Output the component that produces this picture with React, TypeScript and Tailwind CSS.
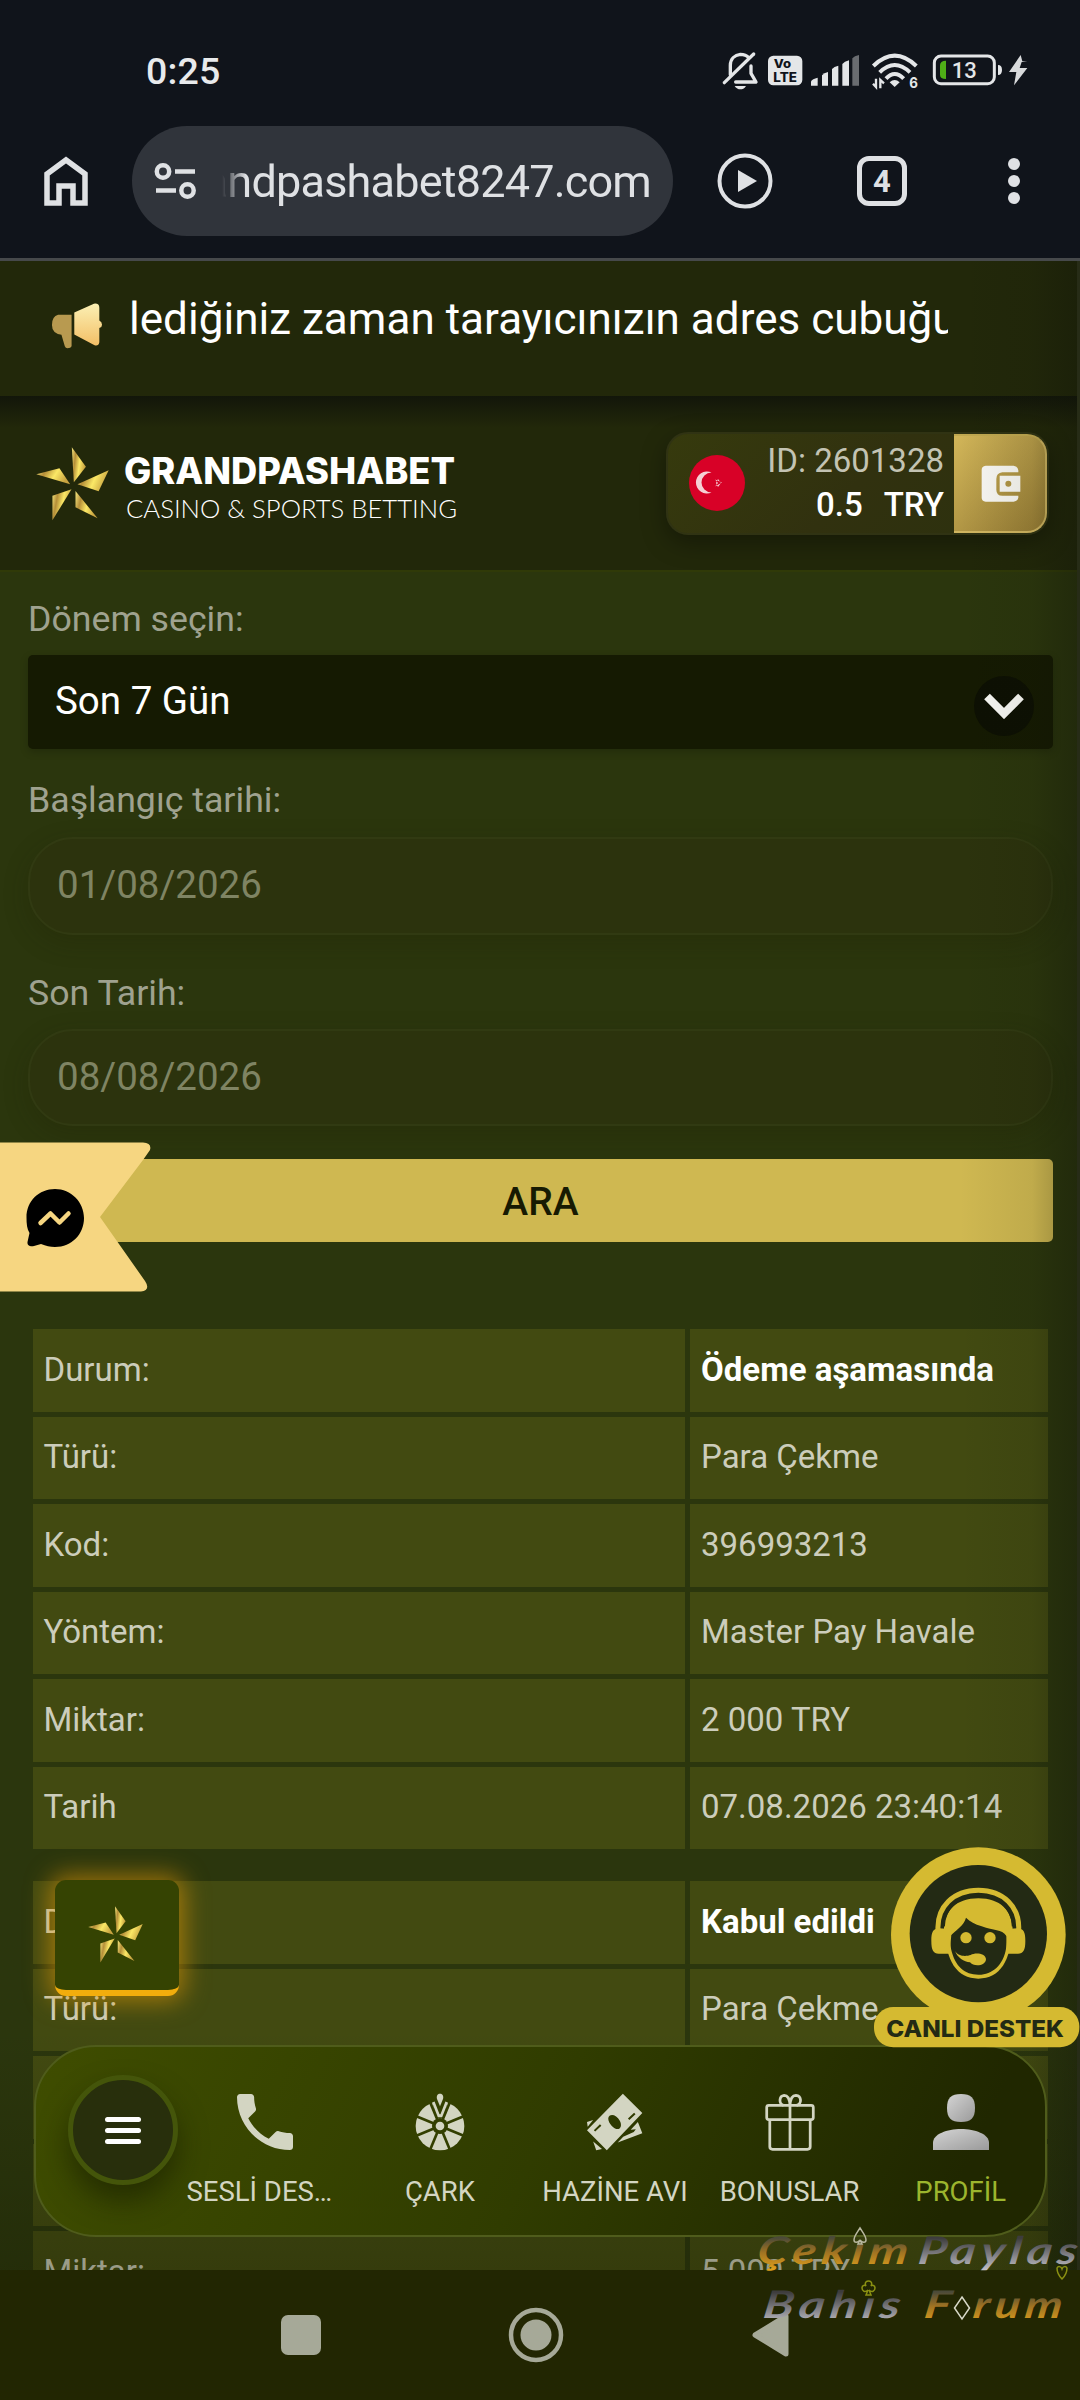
import React from "react";

const rows = [
  ["Durum:", "Ödeme aşamasında"],
  ["Türü:", "Para Çekme"],
  ["Kod:", "396993213"],
  ["Yöntem:", "Master Pay Havale"],
  ["Miktar:", "2 000 TRY"],
  ["Tarih", "07.08.2026 23:40:14"],
];

/* The third and fourth rows stay behind the tab bar */
const rows2 = [
  ["Durum:", "Kabul edildi"],
  ["Türü:", "Para Çekme"],
  ["", ""],
  ["", ""],
  ["Miktar:", "5 000 TRY"],
];

function StatusIcons() {
  return (
    <svg width="330" height="62" viewBox="0 0 990 186" className="block">
      <g fill="none" stroke="#e4e6e8" strokeWidth="10" strokeLinecap="round" strokeLinejoin="round">
        <path d="M46 104V76C46 56 60 45 76 43C88 43 96 47 101 53M108 78V100L123 126H62" />
        <path d="M28 128L116 42" />
      </g>
      <path d="M59 138H93C88 146 82 148 76 148S63 145 59 138Z" fill="#e4e6e8" />
      <rect x="159" y="47" width="103" height="89" rx="16" fill="#e4e6e8" />
      <text x="176" y="85" fontFamily="Inter" fontWeight="800" fontSize="36" textLength="52" lengthAdjust="spacingAndGlyphs" fill="#10141b">Vo</text>
      <text x="175" y="125" fontFamily="Inter" fontWeight="800" fontSize="38" textLength="71" lengthAdjust="spacingAndGlyphs" fill="#10141b">LTE</text>
      <g fill="#e4e6e8">
        <path d="M288 137V124Q292 117 308 113V137Z" />
        <path d="M321 137V106Q327 98 339 96V137Z" />
        <path d="M351 137V87Q357 79 370 77V137Z" />
        <path d="M382 137V72Q388 64 402 61V137Z" />
        <path d="M412 137V55Q418 47 432 45V137Z" opacity=".42" />
      </g>
      <g fill="none" stroke="#e4e6e8" strokeWidth="12">
        <path d="M475 78Q539 16 604 78" />
        <path d="M494 97Q539 53 585 97" />
        <path d="M513 116Q539 88 566 116" />
      </g>
      <path d="M524 127Q539 113 554 127L539 141Z" fill="#e4e6e8" />
      <path d="M483 116V141L474 131M496 145V120L507 130" fill="none" stroke="#e4e6e8" strokeWidth="7" />
      <text x="583" y="144" fontFamily="Inter" fontWeight="700" fontSize="44" textLength="26" lengthAdjust="spacingAndGlyphs" fill="#e4e6e8">6</text>
      <rect x="658" y="48" width="180" height="83" rx="20" fill="none" stroke="#e4e6e8" strokeWidth="9" />
      <path d="M675 76Q675 62 693 62V117Q675 117 675 104Z" fill="#4fae17" />
      <text x="710" y="115" fontFamily="Roboto" fontWeight="500" fontSize="66" textLength="75" lengthAdjust="spacingAndGlyphs" fill="#e4e6e8">13</text>
      <path d="M849 75Q861 75 861 90T849 105Z" fill="#e4e6e8" />
      <path d="M917 45L882 96H904L897 136L937 84H914L920 66H937L922 64Z" fill="#d8dadc" />
    </svg>
  );
}

/* Five-blade pinwheel used by the brand */
function Pinwheel({ className }: { className: string }) {
  return (
    <svg viewBox="20 470 218 222" className={className} preserveAspectRatio="none">
      <defs>
        <linearGradient id="gold" x1="0" y1="0" x2="1" y2="0.3">
          <stop offset="0" stopColor="#f8ea80" />
          <stop offset=".3" stopColor="#b58e38" />
          <stop offset=".62" stopColor="#fbe866" />
          <stop offset="1" stopColor="#c8a340" />
        </linearGradient>
      </defs>
      <g fill="url(#gold)">
        <path d="M127 471L169 529L133 576Z" />
        <path d="M237 540L207 603L144 582Z" />
        <path d="M204 684L138 651V602Z" />
        <path d="M69 690V616L126 597Z" />
        <path d="M21 552L90 534L122 582Z" />
      </g>
    </svg>
  );
}

function Label({ children, className }: { children: React.ReactNode; className: string }) {
  return (
    <div className={"flex items-center text-[35.700px] leading-none text-[#9fa28f] " + className}>{children}</div>
  );
}

function Table({ data }: { data: string[][] }) {
  return (
    <div className="mx-[33px] grid w-[1015px] grid-cols-[652px_358px] gap-[5px]">
      {data.map(([k, v], i) => (
        <React.Fragment key={i}>
          <div className="flex h-[82.5px] items-center bg-[#424a11] pb-[2px] pl-[10.500px] text-[33px] leading-none text-[#cccdbb]">{k}</div>
          <div
            className={
              "flex h-[82.5px] items-center whitespace-nowrap bg-[#424a11] pb-[2px] pl-[11px] text-[33px] leading-none " +
              (i === 0 ? "font-bold text-white" : "text-[#cccdbb]")
            }
          >
            {v}
          </div>
        </React.Fragment>
      ))}
    </div>
  );
}

function NavItem({ label, className, children }: { label: string; className: string; children: React.ReactNode }) {
  return (
    <div className={"flex flex-col items-center pt-[47px] " + className}>
      <div className="flex h-[56px] items-center">{children}</div>
      <span className="mt-[28px] whitespace-nowrap text-[27.500px] leading-[28px]">{label}</span>
    </div>
  );
}

function WheelIcon() {
  return (
    <svg width="50" height="58" viewBox="0 0 150 174">
      <mask id="spokes">
        <rect width="150" height="174" fill="#fff" />
        <g stroke="#000" strokeWidth="8">
          {[22.5, 67.5, 112.5, 157.5].map((a) => (
            <path key={a} d="M0 99H150" transform={`rotate(${a} 75 99)`} />
          ))}
        </g>
        <circle cx="75" cy="99" r="24" fill="#000" />
        <path d="M46 0L62 74H88L104 0Z" fill="#000" />
      </mask>
      <circle cx="75" cy="99" r="73" fill="#d3d5c2" mask="url(#spokes)" />
      <circle cx="75" cy="99" r="13" fill="#d3d5c2" />
      <path d="M75 2C84 2 86 10 84 18L75 40L66 18C64 10 66 2 75 2Z" fill="#d3d5c2" />
      <path d="M55 27L71 68H79L95 27" fill="none" stroke="#d3d5c2" strokeWidth="8" />
    </svg>
  );
}

function MoneyIcon() {
  return (
    <svg width="56" height="58" viewBox="140 220 164 168">
      <g fill="#d3d5c2">
        <path d="M140 304L158 298L142 318Z" />
        <path d="M158 361L184 383L167 387Z" />
        <path d="M289 304L302 337L230 364L246 347L277 333L283 325L268 327Z" />
        <path fillRule="evenodd" d="M245 221L302 278L198 387L140 328ZM206 286C196 294 208 316 222 323C238 330 244 314 236 300C228 286 214 280 206 286Z" />
      </g>
      <path d="M262 296L280 279M162 330L180 313" stroke="#303b00" strokeWidth="6" />
    </svg>
  );
}

function SupportBadge() {
  return (
    <svg width="206" height="202" viewBox="102 80 618 606" className="block">
      <circle cx="415" cy="343" r="262" fill="#d5ba31" />
      <circle cx="415" cy="340" r="206" fill="#232a14" />
      <rect x="102" y="560" width="616" height="121" rx="58" fill="#d5ba31" />
      {/* head */}
      <path d="M316 330C316 420 350 475 415 475S514 420 514 330Z" fill="#d5ba31" />
      <path d="M333 330C336 350 330 360 333 385C345 440 375 462 415 463S490 435 498 385C502 360 498 345 500 325Z" fill="#232a14" />
      <path d="M312 330C312 270 350 234 415 234S518 270 518 330L500 348C484 325 462 332 425 318C405 312 390 304 378 292C372 315 350 328 333 345Z" fill="#d5ba31" />
      <path d="M294 330C290 260 340 210 415 210S540 260 536 330" fill="none" stroke="#d5ba31" strokeWidth="15" />
      <path d="M310 318C312 262 355 224 415 224S518 262 520 318" fill="none" stroke="#232a14" strokeWidth="9" />
      <path d="M330 326V400H296C280 400 274 390 274 362S280 326 296 324Z M500 326V400H534C550 400 556 390 556 362S550 326 534 324Z" fill="#d5ba31" />
      <circle cx="378" cy="352" r="17" fill="#d5ba31" />
      <circle cx="450" cy="352" r="17" fill="#d5ba31" />
      <path d="M345 392C355 410 380 408 392 404C405 396 436 398 438 416C438 438 400 440 390 426C372 424 352 412 345 392Z" fill="#d5ba31" />
      <text x="139" y="649" fontFamily="Inter" fontWeight="800" fontSize="68" textLength="533" lengthAdjust="spacingAndGlyphs" fill="#232a14">CANLI DESTEK</text>
    </svg>
  );
}

function Watermark() {
  return (
    <svg width="330" height="130" viewBox="0 0 330 130" className="block overflow-visible">
      <defs>
        <linearGradient id="wg" gradientUnits="userSpaceOnUse" x1="0" y1="-26" x2="0" y2="6">
          <stop offset="0" stopColor="#4b4a38" />
          <stop offset=".45" stopColor="#a07322" />
          <stop offset="1" stopColor="#dfa01c" />
        </linearGradient>
        <linearGradient id="ws" gradientUnits="userSpaceOnUse" x1="0" y1="-26" x2="0" y2="6">
          <stop offset="0" stopColor="#3d3c3c" />
          <stop offset=".5" stopColor="#7d7c80" />
          <stop offset="1" stopColor="#c0bfc7" />
        </linearGradient>
      </defs>
      <g fontFamily="Lato" fontWeight="700" fontStyle="italic" fontSize="38" letterSpacing="4">
        <g transform="translate(6 53) skewX(-8)">
          <text textLength="156" lengthAdjust="spacingAndGlyphs" fill="url(#wg)">Çekım</text>
          <text x="161" textLength="164" lengthAdjust="spacingAndGlyphs" fill="url(#ws)">Paylas</text>
        </g>
        <g transform="translate(12 107) skewX(-8)">
          <text textLength="142" lengthAdjust="spacingAndGlyphs" fill="url(#ws)">Bahıs</text>
          <text x="161" textLength="32" lengthAdjust="spacingAndGlyphs" fill="url(#wg)">F</text>
          <text x="210" textLength="94" lengthAdjust="spacingAndGlyphs" fill="url(#wg)">rum</text>
        </g>
      </g>
      <g fill="none" strokeWidth="1.5">
        <path d="M110 8C107 13 104 16 104 20C104 23 108 23 110 20L108 24H112L110 20C112 23 116 23 116 20C116 16 113 13 110 8Z" transform="translate(0 9)" stroke="#b9b8a0" />
        <path d="M212 86L219.500 97L212 108L204.500 97Z" stroke="#d8d8c8" />
        <path d="M312 68C308 64 307 60 307 57C308 55 311 55 312 58C313 55 316 55 317 57C317 60 316 64 312 68Z" stroke="#8b9112" />
        <path d="M118 79L116 84H121L119 79C122 82 125 80 125 77C125 74 122 74 121 75C123 71 120 70 118.500 70S114 71 116 75C115 74 112 74 112 77C112 80 115 82 118 79Z" stroke="#8b9112" />
      </g>
    </svg>
  );
}

export default function App() {
  return (
    <div className="relative flex h-[2400px] w-[1080px] flex-col overflow-hidden bg-[#2b360d] font-['Roboto',sans-serif]">
      {/* Status bar and browser toolbar */}
      <div className="flex h-[102px] shrink-0 justify-between bg-[#10141b] pl-[146px] pr-[35px] pt-[40px]">
        <span className="pt-[12px] text-[37.500px] font-medium leading-[38px] tracking-[0.2px] text-[#e8eaec]">0:25</span>
        <StatusIcons />
      </div>
      <div className="flex h-[156px] shrink-0 items-start bg-[#10141b] pt-[24px]">
        <svg width="46" height="52" viewBox="0 0 46 52" className="ml-[43px] mt-[29px]">
          <path d="M4 19L23 5L42 19V48H30V31H16V48H4Z" fill="none" stroke="#dfe1e4" strokeWidth="5.500" />
        </svg>
        <div className="ml-[43px] flex h-[110px] w-[541px] items-center rounded-full bg-[#30343b]">
          <svg width="44" height="38" viewBox="0 0 44 38" className="ml-[22px]" fill="none" stroke="#dfe1e4" strokeWidth="4.500">
            <circle cx="9" cy="9.500" r="6.200" />
            <path d="M21 9.500H41M2 28.500H22" />
            <circle cx="33.500" cy="28.500" r="6.200" />
          </svg>
          <div className="ml-[24px] flex w-[429px] justify-end overflow-hidden whitespace-nowrap pt-[2px] text-[45px] leading-[60px] text-[#dfe1e4] [mask-image:linear-gradient(to_right,transparent,#000_24px)]">
            <span className="tracking-[-0.800px]">grandpashabet8247.com</span>
          </div>
        </div>
        <svg width="56" height="56" viewBox="0 0 56 56" className="ml-[44px] mt-[27px]">
          <circle cx="28" cy="28" r="25.500" fill="none" stroke="#dfe1e4" strokeWidth="4" />
          <path d="M21 17V39L40 28Z" fill="#dfe1e4" />
        </svg>
        <div className="ml-[84px] mt-[30px] flex h-[50px] w-[50px] items-center justify-center rounded-[12px] border-[5px] border-[#dfe1e4] text-[31px] font-bold leading-none text-[#dfe1e4]">4</div>
        <div className="ml-[101px] mt-[32px] flex flex-col gap-[5px]">
          <i className="size-[12px] rounded-full bg-[#dfe1e4]" />
          <i className="size-[12px] rounded-full bg-[#dfe1e4]" />
          <i className="size-[12px] rounded-full bg-[#dfe1e4]" />
        </div>
      </div>
      <div className="h-[3px] shrink-0 bg-[#46494b]" />

      <div className="relative flex h-[2009px] shrink-0 flex-col overflow-hidden">
        {/* Announcement ticker */}
        <div className="flex h-[135px] shrink-0 items-start bg-[#22280a]">
          <svg width="52" height="46" viewBox="64 40 152 136" className="ml-[51px] mt-[42px]">
            <defs>
              <linearGradient id="horn" x1="0" y1="0" x2="0" y2="1">
                <stop offset="0" stopColor="#fbf0b4" />
                <stop offset="1" stopColor="#f3bf66" />
              </linearGradient>
            </defs>
            <path d="M84 75H124V168Q122 174 112 174Q106 174 104 168L94 134Q66 130 66 105T84 75Z" fill="#b89a50" />
            <path d="M132 68L190 42Q206 40 206 54V92Q214 96 214 104T206 114V156Q204 168 192 165L132 133Z" fill="url(#horn)" />
          </svg>
          <div className="ml-[26px] mt-[25px] w-[819px] overflow-hidden whitespace-nowrap text-[44px] leading-[66px] text-white">
            <span className="tracking-[0.030px]">lediğiniz zaman tarayıcınızın adres cubuğuna</span>
          </div>
        </div>

        {/* Brand header */}
        <div className="flex h-[176px] shrink-0 items-start border-b-[2px] border-[#303a08] bg-[linear-gradient(to_bottom,#12160a,#22280a_32px,#22280a)]">
          <Pinwheel className="ml-[36px] mt-[51px] h-[74px] w-[73px]" />
          <svg width="334" height="70" viewBox="0 0 334 70" className="ml-[15px] mt-[54px]">
            <text x="0" y="33.500" fontFamily="Inter" fontWeight="800" fontSize="36.5" textLength="331" lengthAdjust="spacingAndGlyphs" fill="#fff">GRANDPASHABET</text>
            <text x="2" y="68" fontFamily="Lato" fontWeight="300" fontSize="26" textLength="331" lengthAdjust="spacingAndGlyphs" fill="#fff">CASINO &amp; SPORTS BETTING</text>
          </svg>
          <div className="ml-[208px] mt-[36px] flex h-[103px] w-[383px] items-center rounded-[22px] border-[2px] border-[#303313] bg-[linear-gradient(135deg,#363a0d,#31310f_50%,#2c310e)] shadow-[0_8px_24px_rgba(0,0,0,0.35)]">
            <svg width="56" height="56" viewBox="0 0 56 56" className="mb-[2px] ml-[21px]">
              <circle cx="28" cy="28" r="28" fill="#d80127" />
              <path d="M22.500 17.500A11 11 0 1 0 22.500 37.500A8.500 8.500 0 1 1 22.500 17.500Z" fill="#f5cfd4" />
              <path d="M33 27.500L26 24.500L29 28L26 31.500Z M27 28L29 24L32 28L29 32Z" fill="#f5cfd4" />
            </svg>
            <div className="flex w-[199px] flex-col items-end pb-[2px] text-[33px] leading-[44px]">
              <span className="text-[#c3c3b3]">ID: 2601328</span>
              <span className="flex gap-[21px] font-medium text-white">
                <span>0.5</span>
                <span>TRY</span>
              </span>
            </div>
            <div className="ml-[10px] flex h-[99px] w-[93px] items-center justify-center rounded-r-[20px] border-y-[2px] border-r-[2px] border-[#d0b560] border-t-[#c0a850] bg-[linear-gradient(135deg,#d2b659,#947a33)]">
              <svg width="40" height="38" viewBox="0 0 120 114" className="ml-[2px]">
                <path fillRule="evenodd" d="M14 2H98Q110 4 112 16V22H64Q46 24 46 42V74Q46 92 64 92H112V98Q110 108 98 110H14Q2 108 2 98V14Q2 4 14 2Z" fill="#f8f7f2" />
                <path fillRule="evenodd" d="M56 32H118V80H56ZM82 47A9 9 0 1 0 82 65A9 9 0 1 0 82 47Z" fill="#f8f7f2" />
              </svg>
            </div>
          </div>
        </div>

        {/* Filter form */}
        <div className="mx-[28px] flex w-[1025px] shrink-0 flex-col">
          <Label className="h-[83px] pt-[12px]">Dönem seçin:</Label>
          <div className="flex h-[94px] items-center justify-between rounded-[5px] bg-[#151a02] pl-[27px] pr-[19px] text-[38.500px] leading-none text-white shadow-[0_3px_8px_rgba(0,0,0,0.2)]">
            <span className="pb-[2px]">Son 7 Gün</span>
            <span className="mt-[8px] flex size-[60px] items-center justify-center rounded-full bg-[#0d1003]">
              <svg width="40" height="26" viewBox="0 0 40 26">
                <path d="M3 3.500L20 20.500L37 3.500" fill="none" stroke="#f8f8f4" strokeWidth="8" />
              </svg>
            </span>
          </div>
          <Label className="h-[88px] pt-[16px]">Başlangıç tarihi:</Label>
          <div className="flex h-[98px] items-center rounded-[45px] border-[2px] border-[#313a12] bg-[#2c330d] pb-px pl-[27px] text-[38.500px] leading-none text-[#7f8463] shadow-[0_8px_24px_rgba(30,30,0,0.25)]">01/08/2026</div>
          <Label className="h-[94px] pt-[23px]">Son Tarih:</Label>
          <div className="flex h-[97px] items-center rounded-[45px] border-[2px] border-[#313a12] bg-[#2c330d] pl-[27px] text-[38.500px] leading-none text-[#7f8463] shadow-[0_8px_24px_rgba(30,30,0,0.25)]">08/08/2026</div>
          <button className="mt-[33px] flex h-[83px] items-center justify-center rounded-[5px] bg-[#cfb851] pt-[3px] text-[39px] font-medium leading-none text-[#171a02]">ARA</button>
        </div>

        <div className="mt-[87px] shrink-0"><Table data={rows} /></div>
        <div className="mt-[32px] shrink-0"><Table data={rows2} /></div>

        {/* Edge shading over the page */}
        <div className="pointer-events-none absolute bottom-0 left-0 h-[240px] w-full bg-[linear-gradient(to_bottom,transparent,rgba(20,24,0,0.28))]" />
        <div className="pointer-events-none absolute right-0 top-0 h-full w-[120px] bg-[linear-gradient(to_right,transparent,rgba(15,18,8,0.08)_60%,rgba(15,18,8,0.34))]" />
        <div className="absolute right-0 top-0 h-full w-[3px] bg-[#272c17]" />
      </div>

      {/* System navigation */}
      <div className="relative h-[130px] shrink-0 bg-[#222602]">
        <div className="flex items-center pl-[281px] pt-[37px]">
          <div className="size-[40px] rounded-[7px] bg-[#a6a998]" />
          <svg width="56" height="56" viewBox="0 0 56 56" className="ml-[187px]">
            <circle cx="28" cy="28" r="25" fill="none" stroke="#a6a998" strokeWidth="4.500" />
            <circle cx="28" cy="28" r="15.500" fill="#a6a998" />
          </svg>
          <svg width="38" height="44" viewBox="0 0 38 44" className="ml-[188px]">
            <path d="M3 22L34 3V41Z" fill="#a6a998" stroke="#a6a998" strokeWidth="5" strokeLinejoin="round" />
          </svg>
        </div>
      </div>

      {/* Messenger ribbon */}
      <svg width="152" height="150" viewBox="0 0 152 150" className="absolute left-0 top-[1142px]">
        <path d="M0 0.500H143Q152 1 150 8L143 18L100 75L145 139Q151 148 141 149.500H0Z" fill="#f6d681" />
        <path d="M55 47C39 47 26.500 59 26.500 75.500C26.500 82 27 87 29.500 91L27.500 100C27 104 31 105 34 104L41 102C46 104 50 105 55 105C72 105 84 92 84 76S71 47 55 47Z" fill="#000" />
        <path d="M40.500 81L50.500 71.500L59.500 80.500L68.500 71.500" fill="none" stroke="#f6d681" strokeWidth="4.500" strokeLinecap="round" strokeLinejoin="round" />
      </svg>

      {/* Floating brand button */}
      <div className="absolute left-[55px] top-[1880px] flex h-[116px] w-[124px] items-center justify-center rounded-[11px] border-b-[6px] border-[#f2ad0c] bg-[#354302] shadow-[0_0_24px_5px_rgba(222,150,8,0.62)]">
        <Pinwheel className="mb-[2px] mr-[3px] h-[57px] w-[55px]" />
      </div>

      {/* Bottom tab bar */}
      <div className="absolute left-[34px] top-[2045px] flex h-[192px] w-[1013px] items-start rounded-[62px] border-[2px] border-[#4f5c1b] bg-[linear-gradient(115deg,#3f4d00,#303c00_50%,#202700_90%)] text-[#d3d5c2]">
        <div className="ml-[32px] mt-[28px] flex size-[110px] shrink-0 flex-col items-center justify-center gap-[6px] rounded-full border-[5px] border-[#44550a] bg-[#282f0c] shadow-[0_16px_28px_rgba(20,26,0,0.55)]">
          <i className="h-[5px] w-[36px] rounded-full bg-white" />
          <i className="h-[5px] w-[36px] rounded-full bg-white" />
          <i className="h-[5px] w-[36px] rounded-full bg-white" />
        </div>
        <NavItem label="SESLİ DES…" className="w-[164px]">
          <svg width="56" height="56" viewBox="3 3 18 18" className="ml-[12px]" fill="currentColor">
            <path d="M6.620 10.790c1.440 2.830 3.760 5.140 6.590 6.590l2.200-2.200c.27-.27.670-.36 1.020-.24 1.120.37 2.330.57 3.570.57.550 0 1 .45 1 1V20c0 .55-.45 1-1 1-9.390 0-17-7.610-17-17 0-.55.450-1 1-1h3.500c.55 0 1 .45 1 1 0 1.250.2 2.450.57 3.570.11.350.030.740-.250 1.020z" />
          </svg>
        </NavItem>
        <NavItem label="ÇARK" className="w-[200px]"><WheelIcon /></NavItem>
        <NavItem label="HAZİNE AVI" className="ml-[-11px] w-[175px]"><MoneyIcon /></NavItem>
        <NavItem label="BONUSLAR" className="ml-px w-[175px]">
          <svg width="50" height="58" viewBox="656 220 146 168" preserveAspectRatio="none" fill="none" stroke="currentColor" strokeWidth="8">
            <rect x="661" y="256" width="136" height="41" rx="6" />
            <path d="M670 297V376Q670 383 678 383H780Q788 383 788 376V297M729 256V383" />
            <path d="M729 256C728 238 724 227 712 227C696 229 696 252 710 256M729 256C730 238 734 227 746 227C764 229 764 252 748 256" />
          </svg>
        </NavItem>
        <NavItem label="PROFİL" className="w-[170px] text-[#9cb52e]">
          <svg width="56" height="56" viewBox="0 0 56 56">
            <defs>
              <linearGradient id="person" x1="0" y1="0" x2="1" y2="1">
                <stop offset="0" stopColor="#d4d4d4" />
                <stop offset="1" stopColor="#9a9a9a" />
              </linearGradient>
            </defs>
            <g fill="url(#person)">
              <path d="M28 0C38 0 42 4 42 14S38 28 28 28S14 24 14 14S18 0 28 0Z" />
              <path d="M0 56V49C0 40 14 35 28 35S56 40 56 49V56Z" />
            </g>
          </svg>
        </NavItem>
      </div>

      {/* Live support badge */}
      <div className="absolute left-[874px] top-[1847px]"><SupportBadge /></div>

      {/* Forum overlay mark */}
      <div className="pointer-events-none absolute left-[750px] top-[2211px]"><Watermark /></div>
    </div>
  );
}
